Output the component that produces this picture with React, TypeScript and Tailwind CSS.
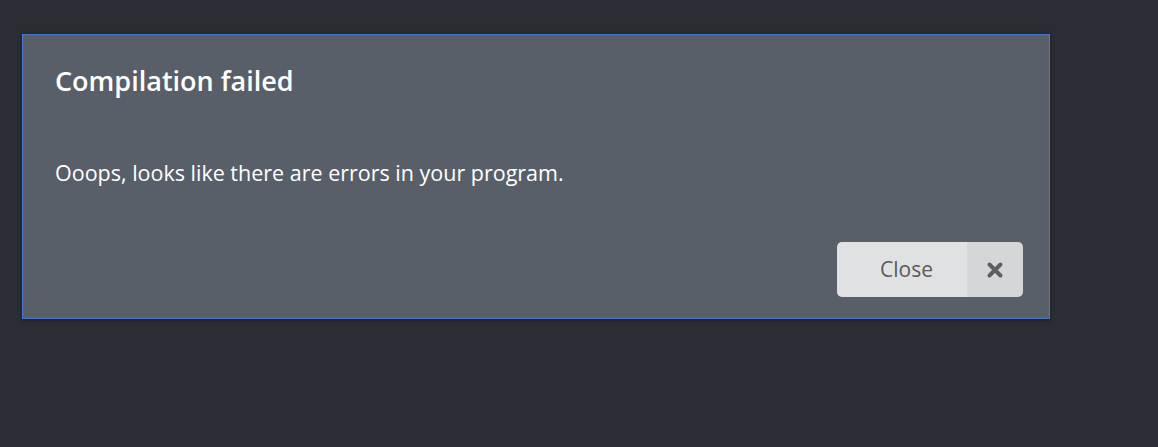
import React from "react";

const App: React.FC = () => {
  return (
    <div className="w-[1158px] h-[447px] bg-[#2a2d33] pt-[34px] pl-[22px] font-['Open_Sans',sans-serif]">
      <div className="w-[1028px] h-[285px] bg-[#585f68] border border-[#4a78cc] shadow-[0_1px_4px_rgba(0,0,0,0.4)] flex flex-col">
        <h1 className="pl-8 pt-[28px] text-[27px] leading-[36px] font-semibold text-white">
          Compilation failed
        </h1>
        <p className="pl-8 pt-[59px] text-[21.5px] leading-[30px] text-white">
          Ooops, looks like there are errors in your program.
        </p>
        <div className="mt-auto flex justify-end pr-[26px] pb-[21px]">
          <button className="flex h-[55px] rounded-[5px] overflow-hidden text-[#5a5a5a]">
            <span className="w-[130px] pl-[9px] bg-[#e0e1e2] flex items-center justify-center text-[21px]">
              Close
            </span>
            <span className="w-[56px] bg-[#d5d6d7] flex items-center justify-center">
              <svg width="18" height="18" viewBox="0 0 18 18">
                <path d="M3.5 3.5 L14.5 14.5 M14.5 3.5 L3.5 14.5" stroke="#5e5e5e" strokeWidth="4" strokeLinecap="round" />
              </svg>
            </span>
          </button>
        </div>
      </div>
    </div>
  );
};

export default App;
